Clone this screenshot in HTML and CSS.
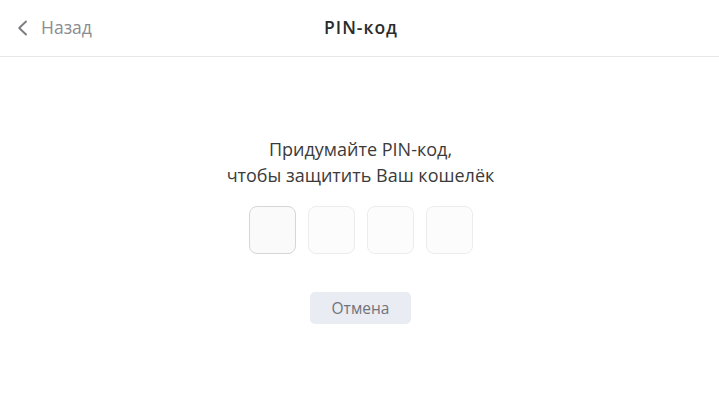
FILE: index.html
```html
<!DOCTYPE html>
<html lang="ru">
<head>
<meta charset="utf-8">
<link rel="stylesheet" href="styles.css">
</head>
<body>
<div class="app">
  <header class="header">
    <a class="back">
      <svg class="chev" width="11" height="16" viewBox="0 0 11 16"><path d="M9 1.5 L2.2 8 L9 14.5" fill="none" stroke="#7a7c80" stroke-width="1.9" stroke-linecap="round" stroke-linejoin="round"/></svg>
      <span>Назад</span>
    </a>
    <h1 class="title">PIN-код</h1>
    <div class="spacer"></div>
  </header>
  <main class="main">
    <p class="prompt">Придумайте PIN-код,<br>чтобы защитить Ваш кошелёк</p>
    <div class="pins">
      <div class="pin pin-active"></div>
      <div class="pin"></div>
      <div class="pin"></div>
      <div class="pin"></div>
    </div>
    <button class="cancel">Отмена</button>
  </main>
</div>
</body>
</html>
```
FILE: styles.css
```css
html, body { margin: 0; padding: 0; background: #fff; }
body { font-family: "Open Sans", "Noto Sans", sans-serif; }
.app { width: 719px; height: 406px; }
.header {
  height: 57px;
  border-bottom: 1px solid #e8e8e8;
  display: grid;
  grid-template-columns: 1fr auto 1fr;
  align-items: center;
  box-sizing: border-box;
  padding: 0 14px 2px 17px;
}
.back {
  display: flex;
  align-items: center;
  gap: 13px;
  color: #8a8c91;
  font-size: 17.5px;
}
.chev { display: block; margin-top: 1px; }
.title {
  margin: 0;
  font-size: 17.5px;
  font-weight: 600;
  letter-spacing: 1px;
  color: #2c2c2c;
}
.main {
  display: flex;
  flex-direction: column;
  align-items: center;
  padding-top: 79px;
  padding-left: 2px;
}
.prompt {
  margin: 0;
  text-align: center;
  font-size: 18px;
  line-height: 26px;
  color: #3b3b3b;
}
.pins {
  display: flex;
  gap: 12px;
  margin-top: 18px;
}
.pin {
  width: 47px;
  height: 48px;
  box-sizing: border-box;
  border: 1px solid #ececec;
  border-radius: 8px;
  background: #fcfcfc;
}
.pin-active { border-color: #d6d6d6; background: #fafafa; }
.cancel {
  margin-top: 38px;
  width: 101px;
  height: 32px;
  border: none;
  border-radius: 5px;
  background: #e9ecf3;
  color: #707379;
  font-family: inherit;
  font-size: 15.5px;
}
```
